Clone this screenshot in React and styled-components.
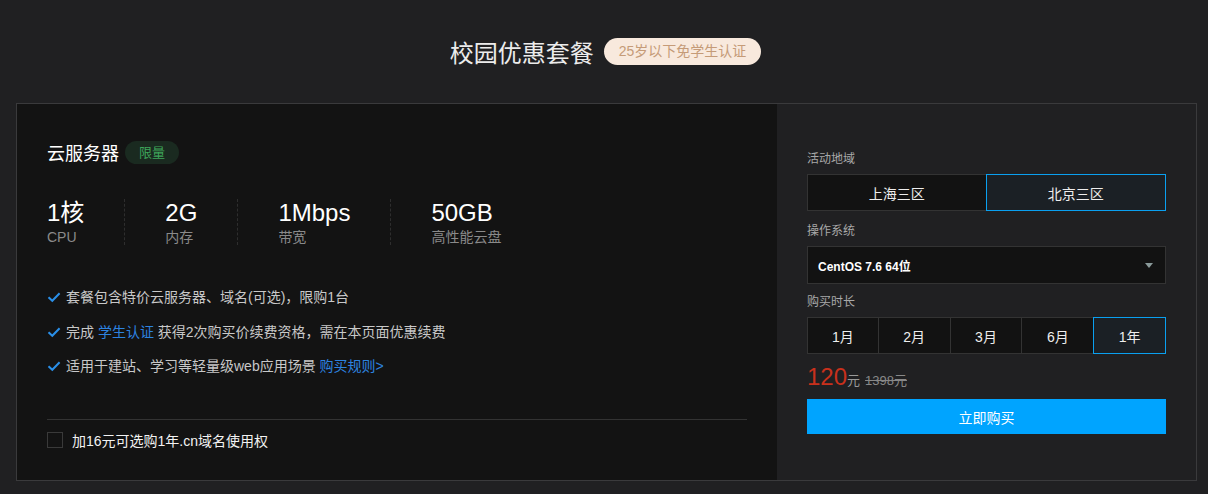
import React, { useState } from 'react';
import styled, { createGlobalStyle } from 'styled-components';

const GlobalStyle = createGlobalStyle`
  body {
    margin: 0;
    background: #202022;
    font-family: "Liberation Sans", "Noto Sans CJK SC", sans-serif;
    color: #fff;
  }
`;

const stats = [
  { value: '1核', label: 'CPU' },
  { value: '2G', label: '内存' },
  { value: '1Mbps', label: '带宽' },
  { value: '50GB', label: '高性能云盘' },
];

const regions = ['上海三区', '北京三区'];
const durations = ['1月', '2月', '3月', '6月', '1年'];

const Check = () => (
  <svg width="14" height="14" viewBox="0 0 14 14">
    <path d="M1.5 7.2 L5.3 10.8 L12.6 3.2" fill="none" stroke="#2a8fe8" strokeWidth="2" />
  </svg>
);

const App = () => {
  const [region, setRegion] = useState(1);
  const [duration, setDuration] = useState(4);
  const [domain, setDomain] = useState(false);

  return (
    <Page>
      <GlobalStyle />
      <Header>
        <Title>校园优惠套餐</Title>
        <Tag>25岁以下免学生认证</Tag>
      </Header>
      <Card>
        <Left>
          <ProductRow>
            <ProductName>云服务器</ProductName>
            <Limited>限量</Limited>
          </ProductRow>
          <Stats>
            {stats.map((s) => (
              <Stat key={s.label}>
                <StatValue>{s.value}</StatValue>
                <StatLabel>{s.label}</StatLabel>
              </Stat>
            ))}
          </Stats>
          <Features>
            <Feature>
              <Check />
              <span>套餐包含特价云服务器、域名(可选)，限购1台</span>
            </Feature>
            <Feature>
              <Check />
              <span>
                完成 <Link>学生认证</Link> 获得2次购买价续费资格，需在本页面优惠续费
              </span>
            </Feature>
            <Feature>
              <Check />
              <span>
                适用于建站、学习等轻量级web应用场景 <Link>购买规则&gt;</Link>
              </span>
            </Feature>
          </Features>
          <Divider />
          <Addon onClick={() => setDomain(!domain)}>
            <Box $checked={domain} />
            <span>加16元可选购1年.cn域名使用权</span>
          </Addon>
        </Left>
        <Right>
          <Label>活动地域</Label>
          <Segments $cols={2}>
            {regions.map((r, i) => (
              <Segment key={r} $active={region === i} onClick={() => setRegion(i)}>
                {r}
              </Segment>
            ))}
          </Segments>
          <Label>操作系统</Label>
          <Select>
            <span>CentOS 7.6 64位</span>
            <Caret />
          </Select>
          <Label>购买时长</Label>
          <Segments $cols={5}>
            {durations.map((d, i) => (
              <Segment key={d} $active={duration === i} onClick={() => setDuration(i)}>
                {d}
              </Segment>
            ))}
          </Segments>
          <PriceRow>
            <Price>120</Price>
            <Unit>元</Unit>
            <OldPrice>1398元</OldPrice>
          </PriceRow>
          <BuyButton>立即购买</BuyButton>
        </Right>
      </Card>
    </Page>
  );
};

export default App;

const Page = styled.div`
  width: 1208px;
  height: 494px;
  padding: 0 11px 0 16px;
  box-sizing: border-box;
  overflow: hidden;
`;

const Header = styled.div`
  display: flex;
  align-items: center;
  justify-content: center;
  gap: 10px;
  height: 103px;
  padding-right: 2px;
  box-sizing: border-box;
`;

const Title = styled.h2`
  margin: 0;
  font-size: 24px;
  font-weight: 400;
  color: #ececec;
`;

const Tag = styled.span`
  height: 27px;
  line-height: 27px;
  padding: 0 15px;
  border-radius: 14px;
  background: #f8e9dd;
  color: #c59b78;
  font-size: 14px;
`;

const Card = styled.div`
  display: flex;
  border: 1px solid #3a3a3c;
  height: 378px;
  box-sizing: border-box;
`;

const Left = styled.div`
  width: 760px;
  background: #131313;
  padding: 35px 30px 0 30px;
  box-sizing: border-box;
`;

const ProductRow = styled.div`
  display: flex;
  align-items: center;
  gap: 6px;
`;

const ProductName = styled.span`
  font-size: 18px;
  color: #fff;
`;

const Limited = styled.span`
  height: 23px;
  line-height: 23px;
  padding: 0 14px;
  border-radius: 12px;
  background: #1a2a20;
  color: #3ea55a;
  font-size: 13px;
`;

const Stats = styled.div`
  display: flex;
  margin-top: 34px;
`;

const Stat = styled.div`
  padding: 0 40px;
  border-left: 1px dashed #2e2e2e;
  display: flex;
  flex-direction: column;
  gap: 2px;

  &:first-child {
    padding-left: 0;
    border-left: none;
  }
`;

const StatValue = styled.span`
  font-size: 24px;
  line-height: 28px;
  color: #fff;
`;

const StatLabel = styled.span`
  font-size: 14px;
  line-height: 16px;
  color: #8a8a8a;
`;

const Features = styled.ul`
  list-style: none;
  margin: 44px 0 0;
  padding: 0;
  display: flex;
  flex-direction: column;
  gap: 18.5px;
`;

const Feature = styled.li`
  display: flex;
  align-items: center;
  gap: 5px;
  font-size: 14px;
  line-height: 16px;
  color: #c8c8c8;
`;

const Link = styled.a`
  color: #2d83e0;
  cursor: pointer;
`;

const Divider = styled.div`
  height: 1px;
  background: #333;
  margin-top: 45px;
`;

const Addon = styled.label`
  display: flex;
  align-items: center;
  gap: 9px;
  margin-top: 10px;
  font-size: 14px;
  color: #f2f2f2;
  cursor: pointer;
`;

const Box = styled.span`
  width: 14px;
  height: 14px;
  border: 1px solid #3a3a3a;
  background: ${(p) => (p.$checked ? '#00a4ff' : 'transparent')};
`;

const Right = styled.div`
  flex: 1;
  background: #202022;
  padding: 48px 30px 0 30px;
  box-sizing: border-box;
  display: flex;
  flex-direction: column;
`;

const Label = styled.div`
  font-size: 12px;
  line-height: 14px;
  color: #a8a8a8;
  margin-bottom: 8px;
`;

const Segments = styled.div`
  display: grid;
  grid-template-columns: repeat(${(p) => p.$cols}, 1fr);
  margin-bottom: 13px;
`;

const Segment = styled.div`
  height: 37px;
  display: flex;
  align-items: center;
  justify-content: center;
  font-size: 14px;
  color: #eee;
  background: ${(p) => (p.$active ? '#1b2025' : '#121212')};
  border: 1px solid ${(p) => (p.$active ? '#0aa0f0' : '#333')};
  margin-left: -1px;
  position: relative;
  z-index: ${(p) => (p.$active ? 1 : 0)};
  box-sizing: border-box;
  cursor: pointer;

  &:first-child {
    margin-left: 0;
  }
`;

const Select = styled.div`
  height: 36px;
  display: flex;
  align-items: center;
  justify-content: space-between;
  padding: 0 12px 0 10px;
  background: #121212;
  border: 1px solid #333;
  font-size: 12px;
  font-weight: 700;
  color: #fff;
  margin-bottom: 11px;
`;

const Caret = styled.span`
  width: 0;
  height: 0;
  border-left: 4px solid transparent;
  border-right: 4px solid transparent;
  border-top: 5px solid #8a9a9a;
`;

const PriceRow = styled.div`
  display: flex;
  align-items: baseline;
  margin-top: -4px;
  height: 28px;
  line-height: 28px;
`;

const Price = styled.span`
  font-size: 24px;
  color: #c9301c;
`;

const Unit = styled.span`
  font-size: 13px;
  color: #999;
  margin-right: 5px;
`;

const OldPrice = styled.span`
  font-size: 13px;
  color: #888;
  text-decoration: line-through;
`;

const BuyButton = styled.button`
  margin-top: 8px;
  height: 35px;
  border: none;
  background: #00a4ff;
  color: #fff;
  font-size: 14px;
  font-family: inherit;
  cursor: pointer;
`;
